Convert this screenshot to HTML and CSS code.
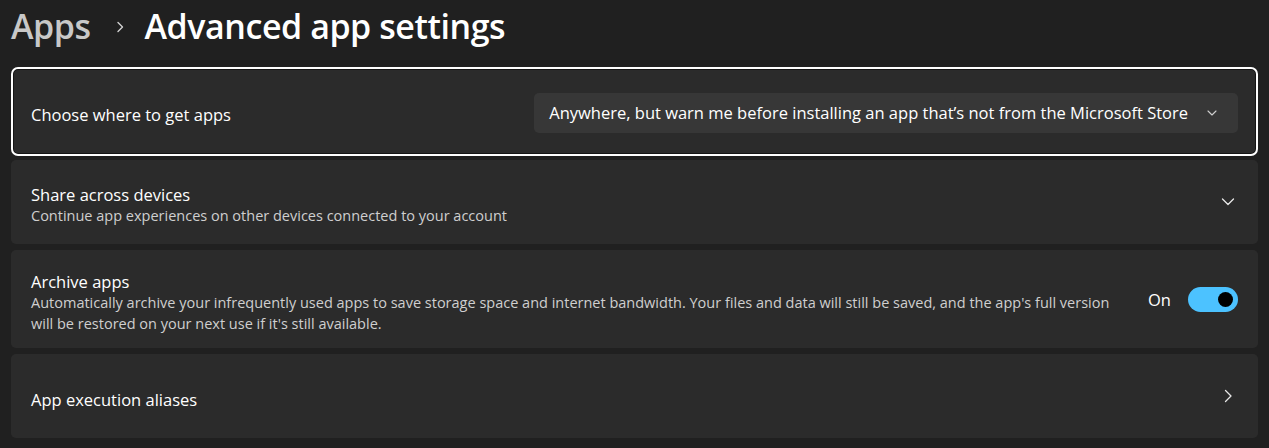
FILE: index.html
```html
<!DOCTYPE html>
<html lang="en">
<head>
    <meta charset="UTF-8">
    <meta name="viewport" content="width=device-width, initial-scale=1.0">
    <title>Advanced app settings</title>
    <link rel="stylesheet" href="styles.css">
</head>
<body>

    <header class="breadcrumb">
        <span class="crumb-parent">Apps</span>
        <svg class="crumb-sep" width="10" height="14" viewBox="0 0 10 14"><path d="M3 2.5 L7.5 7 L3 11.5" fill="none" stroke="#d0d0d0" stroke-width="1.4" stroke-linecap="round" stroke-linejoin="round"/></svg>
        <span class="crumb-current">Advanced app settings</span>
    </header>

    <main class="settings">

        <section class="card card-focus">
            <div class="card-text">
                <div class="card-title">Choose where to get apps</div>
            </div>
            <div class="dropdown">
                <span class="dropdown-label">Anywhere, but warn me before installing an app that’s not from the Microsoft Store</span>
                <svg width="12" height="8" viewBox="0 0 12 8"><path d="M2 2 L6 6 L10 2" fill="none" stroke="#cfcfcf" stroke-width="1.1" stroke-linecap="round" stroke-linejoin="round"/></svg>
            </div>
        </section>

        <section class="card">
            <div class="card-text">
                <div class="card-title">Share across devices</div>
                <div class="card-desc">Continue app experiences on other devices connected to your account</div>
            </div>
            <svg class="card-chevron" width="16" height="16" viewBox="0 0 16 16"><path d="M2.5 5 L8 10.5 L13.5 5" fill="none" stroke="#e8e8e8" stroke-width="1.3" stroke-linecap="round" stroke-linejoin="round"/></svg>
        </section>

        <section class="card card-tall">
            <div class="card-text">
                <div class="card-title">Archive apps</div>
                <div class="card-desc">Automatically archive your infrequently used apps to save storage space and internet bandwidth. Your files and data will still be saved, and the app's full version will be restored on your next use if it's still available.</div>
            </div>
            <div class="toggle-wrap">
                <span class="toggle-label">On</span>
                <span class="toggle"><span class="toggle-knob"></span></span>
            </div>
        </section>

        <section class="card">
            <div class="card-text">
                <div class="card-title">App execution aliases</div>
            </div>
            <svg class="card-chevron" width="16" height="16" viewBox="0 0 16 16"><path d="M5.5 2.5 L11 8 L5.5 13.5" fill="none" stroke="#e8e8e8" stroke-width="1.3" stroke-linecap="round" stroke-linejoin="round"/></svg>
        </section>

    </main>

</body>
</html>
```

FILE: styles.css
```css
/* dasar */
* {
    margin: 0;
    padding: 0;
    box-sizing: border-box;
}

body {
    background: #202020;
    color: #ffffff;
    font-family: 'Open Sans', 'Noto Sans', sans-serif;
    padding: 0 11px;
    overflow: hidden;
}

/* judul / breadcrumb */
.breadcrumb {
    display: flex;
    align-items: center;
    height: 52px;
    margin-bottom: 17px;
    font-size: 34px;
    font-weight: 600;
    letter-spacing: -0.45px;
}

.crumb-parent {
    color: #c8c8c8;
}

.crumb-sep {
    margin: 2px 20px 0 24px;
}

.crumb-current {
    color: #ffffff;
}

/* kartu */
.settings {
    display: flex;
    flex-direction: column;
    gap: 6px;
}

.card {
    display: flex;
    align-items: center;
    min-height: 84px;
    padding: 0 20px;
    background: #2b2b2b;
    border-radius: 5px;
}

.card-focus {
    margin: 0 2px;
    padding: 0 18px;
    min-height: 85px;
    outline: 2px solid #ffffff;
    box-shadow: inset 0 0 0 1px #151515;
}

.card-tall {
    min-height: 98px;
}

.card-text {
    flex: 1;
    padding-top: 6px;
}

.card-title {
    font-size: 16.5px;
    line-height: 21px;
    color: #ffffff;
}

.card-desc {
    font-size: 14.5px;
    line-height: 21px;
    color: #cfcfcf;
    max-width: 1095px;
}

.card-chevron {
    margin-right: 2px;
}

/* dropdown */
.dropdown {
    display: flex;
    align-items: center;
    gap: 18px;
    height: 40px;
    margin-top: 2px;
    padding: 0 20px 0 15px;
    background: #373737;
    border-radius: 5px;
}

.dropdown-label {
    font-size: 16.5px;
    color: #ffffff;
}

/* toggle */
.toggle-wrap {
    display: flex;
    align-items: center;
    gap: 17px;
    margin-left: 30px;
}

.toggle-label {
    font-size: 16.5px;
}

.toggle {
    display: flex;
    align-items: center;
    justify-content: flex-end;
    width: 50px;
    height: 25px;
    padding-right: 5px;
    background: #4cc2ff;
    border-radius: 13px;
}

.toggle-knob {
    width: 15px;
    height: 15px;
    background: #000000;
    border-radius: 50%;
}
```
